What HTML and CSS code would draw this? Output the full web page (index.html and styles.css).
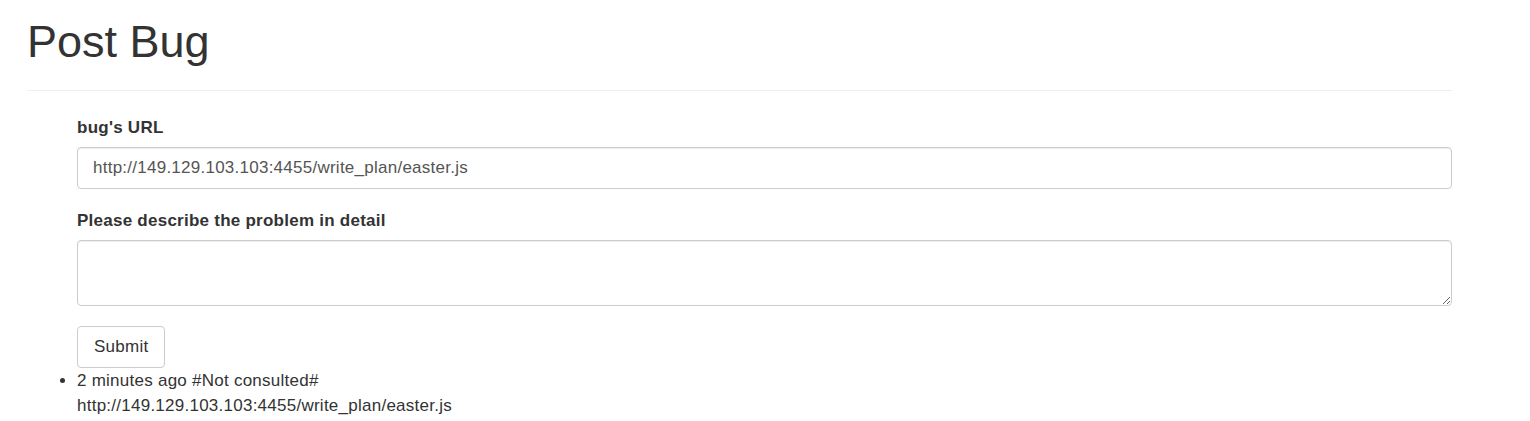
FILE: index.html
```html
<!DOCTYPE html>
<html lang="en">
<head>
<meta charset="utf-8">
<title>Post Bug</title>
<link rel="stylesheet" href="styles.css">
</head>
<body>
<div class="page">
  <div class="page-header">
    <h1>Post Bug</h1>
  </div>
  <form class="bug-form">
    <div class="form-group">
      <label class="form-label" for="url">bug's URL</label>
      <input class="form-control" id="url" type="text" value="http://149.129.103.103:4455/write_plan/easter.js">
    </div>
    <div class="form-group">
      <label class="form-label" for="desc">Please describe the problem in detail</label>
      <textarea class="form-control form-textarea" id="desc"></textarea>
    </div>
    <button class="btn" type="button">Submit</button>
  </form>
  <ul class="bug-list">
    <li>2 minutes ago #Not consulted#<br>http://149.129.103.103:4455/write_plan/easter.js</li>
  </ul>
</div>
</body>
</html>
```

FILE: styles.css
```css
* { box-sizing: border-box; }
body {
  margin: 0;
  font-family: "Liberation Sans", Arial, sans-serif;
  font-size: 17px;
  letter-spacing: 0.25px;
  line-height: 24px;
  color: #333;
  background: #fff;
}
.page {
  width: 1452px;
  padding-left: 27px;
}
.page-header {
  margin-top: 17px;
  padding-bottom: 23px;
  border-bottom: 1px solid #eee;
}
.page-header h1 {
  margin: 0;
  font-size: 45px;
  font-weight: 400;
  letter-spacing: 0;
  line-height: 50px;
  color: #333;
}
.bug-form {
  margin-left: 50px;
  padding-top: 25px;
}
.form-group {
  margin-bottom: 20px;
}
.form-label {
  display: block;
  font-weight: 700;
  line-height: 23px;
  margin-bottom: 8px;
}
.form-control {
  display: block;
  width: 100%;
  height: 42px;
  padding: 8px 15px;
  font-family: inherit;
  font-size: 17px;
  letter-spacing: 0.25px;
  line-height: 24px;
  color: #555;
  background: #fff;
  border: 1px solid #ccc;
  border-radius: 4px;
  box-shadow: inset 0 1px 1px rgba(0,0,0,.075);
}
.form-textarea {
  height: 66px;
  resize: vertical;
}
.btn {
  display: block;
  height: 42px;
  padding: 8px 16px;
  font-family: inherit;
  font-size: 17px;
  letter-spacing: 0.25px;
  line-height: 24px;
  color: #333;
  background: #fff;
  border: 1px solid #ccc;
  border-radius: 4px;
}
.bug-list {
  margin: 0;
  padding-left: 50px;
}
.bug-list li {
  line-height: 25px;
}
```
